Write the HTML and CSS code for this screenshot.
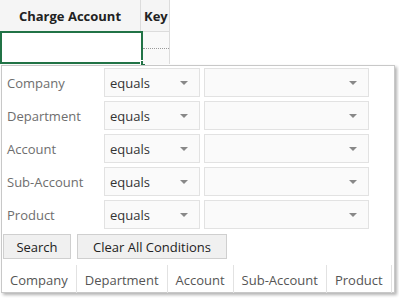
FILE: index.html
```html
<!DOCTYPE html>
<html lang="en">

<head>
    <meta charset="UTF-8">
    <title>Charge Account</title>
    <link rel="stylesheet" href="styles.css">
</head>

<body>
    <div class="sheet">
        <div class="grid">
            <div class="hd hd-account">Charge Account</div>
            <div class="hd hd-key">Key</div>
            <div class="cell cell-account"><span class="handle"></span></div>
            <div class="cell cell-key"><span class="dots"></span></div>
        </div>

        <div class="popup">
            <div class="conditions">
                <label class="cond-label">Company</label>
                <div class="select">equals</div>
                <div class="select"></div>

                <label class="cond-label">Department</label>
                <div class="select">equals</div>
                <div class="select"></div>

                <label class="cond-label">Account</label>
                <div class="select">equals</div>
                <div class="select"></div>

                <label class="cond-label">Sub-Account</label>
                <div class="select">equals</div>
                <div class="select"></div>

                <label class="cond-label">Product</label>
                <div class="select">equals</div>
                <div class="select"></div>
            </div>

            <div class="buttons">
                <button class="btn btn-search">Search</button>
                <button class="btn btn-clear">Clear All Conditions</button>
            </div>

            <div class="columns">
                <div class="col">Company</div>
                <div class="col">Department</div>
                <div class="col">Account</div>
                <div class="col">Sub-Account</div>
                <div class="col">Product</div>
            </div>
        </div>
    </div>
</body>

</html>
```

FILE: styles.css
```css
* {
    padding: 0;
    margin: 0;
    box-sizing: border-box;
}

body {
    font-family: "Open Sans", "Noto Sans", sans-serif;
    font-size: 13px;
    color: #333;
    background: #fff;
}

.sheet {
    position: relative;
    width: 399px;
    height: 298px;
}

/* grid at the top */
.grid {
    display: grid;
    grid-template-columns: 141px 29px;
    grid-template-rows: 32px 32px;
    width: 171px;
}

.hd {
    background: #f5f5f5;
    border-right: 1px solid #dcdcdc;
    border-bottom: 1px solid #dcdcdc;
    font-weight: bold;
    color: #222;
    display: flex;
    align-items: center;
    justify-content: center;
}

.hd-key {
    justify-content: flex-start;
    padding-left: 3px;
}

.cell {
    border-right: 1px solid #dcdcdc;
    position: relative;
}

.cell-account {
    border: 2px solid #217346;
    margin-top: -1px;
    width: 143px;
}

.handle {
    position: absolute;
    right: -4px;
    bottom: -3px;
    width: 5px;
    height: 5px;
    background: #217346;
    border-left: 1px solid #fff;
    border-top: 1px solid #fff;
}

.cell-key {
    background: #f9f9f9;
    margin-left: 2px;
    width: 27px;
    display: flex;
    align-items: center;
}

.dots {
    display: block;
    width: 100%;
    border-top: 1px dotted #999;
}

/* filter popup */
.popup {
    position: absolute;
    left: 1px;
    top: 65px;
    width: 394px;
    height: 228px;
    background: #fff;
    border: 1px solid #c8c8c8;
    box-shadow: 2px 2px 3px rgba(0, 0, 0, 0.3);
    padding: 2px 0 0 0;
}

.conditions {
    display: grid;
    grid-template-columns: 98px 96px 165px;
    grid-auto-rows: 29px;
    column-gap: 4px;
    row-gap: 4px;
}

.cond-label {
    color: #6e6e6e;
    padding-left: 5px;
    display: flex;
    align-items: center;
}

.select {
    position: relative;
    background: #fafafa;
    border: 1px solid #e2e2e2;
    padding-left: 5px;
    display: flex;
    align-items: center;
    color: #333;
}

.select::after {
    content: "";
    position: absolute;
    right: 11px;
    top: 12px;
    border-left: 4px solid transparent;
    border-right: 4px solid transparent;
    border-top: 4px solid #888;
}

.buttons {
    display: flex;
    gap: 6px;
    padding: 5px 0 0 1px;
}

.btn {
    font-family: inherit;
    font-size: 13px;
    color: #222;
    height: 25px;
    background: #f0f0f0;
    border: 1px solid #cfcfcf;
}

.btn-search {
    width: 68px;
}

.btn-clear {
    width: 150px;
}

.columns {
    display: flex;
    margin-top: 6px;
    height: 28px;
}

.col {
    color: #555;
    border-right: 1px solid #e2e2e2;
    padding: 6px 8px 0 8px;
}
```
